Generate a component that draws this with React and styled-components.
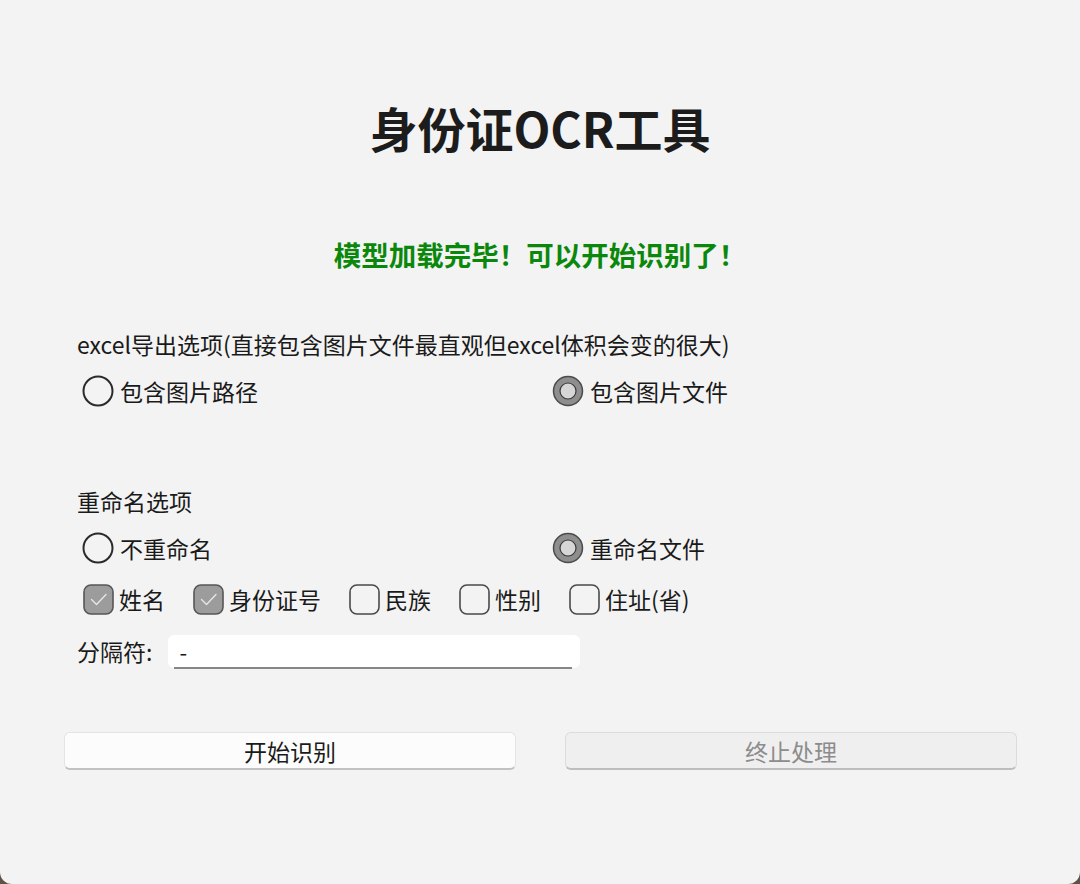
import styled, { createGlobalStyle } from "styled-components";

const Global = createGlobalStyle`
  html, body {
    margin: 0;
    padding: 0;
    background: #5f5145;
  }
  * { box-sizing: border-box; }
`;

const font = `"Noto Sans CJK SC", "Noto Sans", sans-serif`;

const Window = styled.div`
  width: 1080px;
  height: 884px;
  background: #f3f3f3;
  border-radius: 0 0 12px 12px;
  font-family: ${font};
  color: #1a1a1a;
  display: flex;
  flex-direction: column;
  overflow: hidden;
`;

const Title = styled.h1`
  margin: 97px 0 0;
  font-size: 48px;
  line-height: 60px;
  font-weight: 700;
  text-align: center;
  color: #1c1c1c;
`;

const Status = styled.div`
  margin-top: 79px;
  font-size: 27.5px;
  line-height: 36px;
  font-weight: 700;
  text-align: center;
  color: #0b880b;
`;

const Section = styled.div`
  margin-top: ${(p) => p.$top}px;
  padding-left: 77px;
  display: flex;
  flex-direction: column;
`;

const Label = styled.div`
  font-size: 23px;
  line-height: 32px;
`;

const RadioRow = styled.div`
  margin-top: 13px;
  padding-left: 5px;
  display: grid;
  grid-template-columns: 470px 1fr;
  height: 36px;
  align-items: center;
`;

const Option = styled.label`
  display: flex;
  align-items: center;
  gap: 6px;
  font-size: 23px;
  line-height: 36px;
`;

const CheckRow = styled.div`
  margin-top: 15px;
  padding-left: 6px;
  display: flex;
  align-items: center;
  gap: 28px;
  height: 36px;
`;

const CheckItem = styled.label`
  display: flex;
  align-items: center;
  gap: 5px;
  font-size: 23px;
  line-height: 36px;
`;

const SepRow = styled.div`
  margin-top: 17px;
  display: flex;
  align-items: center;
  gap: 16px;
  height: 34px;
`;

const InputWrap = styled.div`
  position: relative;
  width: 412px;
  height: 33px;
  background: #ffffff;
  border-radius: 6px;
  &::after {
    content: "";
    position: absolute;
    left: 6px;
    right: 8px;
    bottom: -1px;
    height: 2px;
    background: #868686;
  }
`;

const Input = styled.input`
  width: 100%;
  height: 100%;
  border: none;
  outline: none;
  background: transparent;
  padding: 0 11px;
  font-family: ${font};
  font-size: 22px;
  color: #1a1a1a;
`;

const Buttons = styled.div`
  margin-top: 64px;
  padding: 0 63px 0 64px;
  display: grid;
  grid-template-columns: 1fr 1fr;
  gap: 49px;
`;

const Button = styled.button`
  height: 38px;
  border-radius: 6px;
  border: 1px solid ${(p) => (p.disabled ? "#dcdcdc" : "#e4e4e4")};
  border-bottom: 2px solid ${(p) => (p.disabled ? "#bdbdbd" : "#c2c2c2")};
  background: ${(p) => (p.disabled ? "#efefef" : "#fcfcfc")};
  color: ${(p) => (p.disabled ? "#8c8c8c" : "#1a1a1a")};
  font-family: ${font};
  font-size: 23px;
  line-height: 34px;
  padding: 0;
`;

function Radio({ checked }) {
  return (
    <svg width="32" height="32" viewBox="0 0 32 32">
      {checked ? (
        <>
          <circle cx="16" cy="16" r="14.5" fill="#8e8e8e" stroke="#4a4a4a" strokeWidth="1.5" />
          <circle cx="16" cy="16" r="8" fill="#d6d6d6" stroke="#3a3a3a" strokeWidth="1.2" />
        </>
      ) : (
        <circle cx="16" cy="16" r="14.5" fill="none" stroke="#2a2a2a" strokeWidth="2" />
      )}
    </svg>
  );
}

function Check({ checked }) {
  return (
    <svg width="31" height="31" viewBox="0 0 31 31">
      <rect
        x="1"
        y="1"
        width="29"
        height="29"
        rx="7"
        fill={checked ? "#9c9c9c" : "none"}
        stroke={checked ? "#565656" : "#4a4a4a"}
        strokeWidth="1.6"
      />
      {checked && (
        <path d="M8.5 15.5l5 5L23 10.5" fill="none" stroke="#e6e6e6" strokeWidth="1.4" strokeLinecap="round" strokeLinejoin="round" />
      )}
    </svg>
  );
}

const fields = [
  { name: "姓名", on: true },
  { name: "身份证号", on: true },
  { name: "民族", on: false },
  { name: "性别", on: false },
  { name: "住址(省)", on: false },
];

export default function App() {
  return (
    <>
      <Global />
      <Window>
        <Title>身份证OCR工具</Title>
        <Status>模型加载完毕！可以开始识别了！</Status>

        <Section $top={56}>
          <Label>excel导出选项(直接包含图片文件最直观但excel体积会变的很大)</Label>
          <RadioRow>
            <Option>
              <Radio />
              包含图片路径
            </Option>
            <Option>
              <Radio checked />
              包含图片文件
            </Option>
          </RadioRow>
        </Section>

        <Section $top={76}>
          <Label>重命名选项</Label>
          <RadioRow>
            <Option>
              <Radio />
              不重命名
            </Option>
            <Option>
              <Radio checked />
              重命名文件
            </Option>
          </RadioRow>
          <CheckRow>
            {fields.map((f) => (
              <CheckItem key={f.name}>
                <Check checked={f.on} />
                {f.name}
              </CheckItem>
            ))}
          </CheckRow>
          <SepRow>
            <Label>分隔符:</Label>
            <InputWrap>
              <Input defaultValue="-" />
            </InputWrap>
          </SepRow>
        </Section>

        <Buttons>
          <Button>开始识别</Button>
          <Button disabled>终止处理</Button>
        </Buttons>
      </Window>
    </>
  );
}
